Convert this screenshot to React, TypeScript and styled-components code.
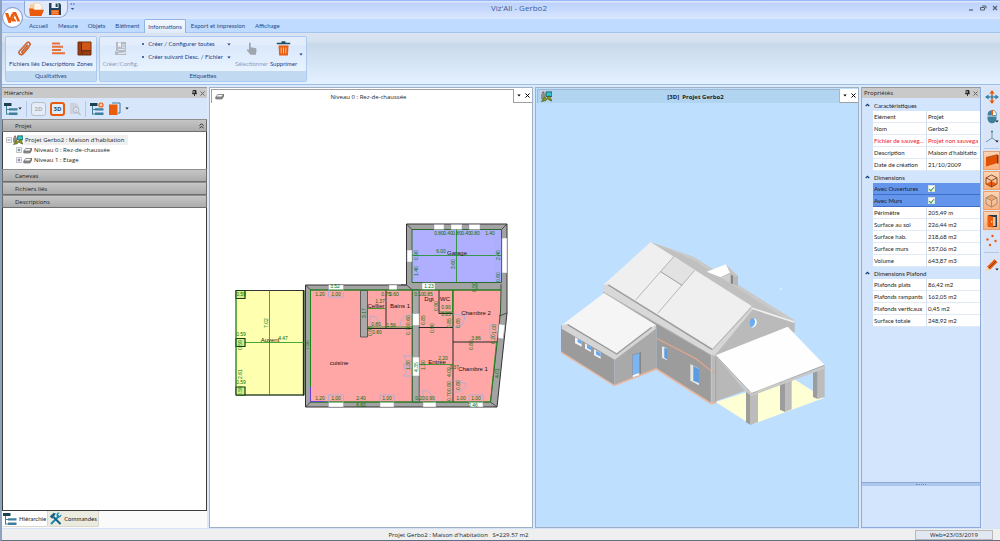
import React from "react";
import styled, { createGlobalStyle, css } from "styled-components";

const GlobalStyle = createGlobalStyle`
  * { box-sizing: border-box; }
  html, body { margin: 0; }
  body {
    font-family: "Open Sans", "Noto Sans", sans-serif;
    font-size: 6px;
    line-height: 10px;
    color: #1c1c1c;
    background: #cfe1f9;
  }
  button, input { font: inherit; color: inherit; margin: 0; }
  svg { display: block; flex: none; }
`;

const ORANGE = "#ea5b0c";
const STEEL = "#3f7f9b";
const NAVY = "#1f4e68";
const NARROW = `Lato, "Open Sans", sans-serif`;

/* ---------- Window frame ---------- */

const Window = styled.div`
  min-height: 100vh;
  display: flex;
  flex-direction: column;
  border-left: 2px solid #8ea3c0;
  border-bottom: 1px solid #5f6f86;
`;

const TitleBar = styled.header`
  position: relative;
  height: 19px;
  display: flex;
  align-items: flex-start;
  border-top: 1px solid #98b7f3;
  background: linear-gradient(#dbe7ff 0 1px, #bdd2fd 2px, #c8dafd 9px, #dae7fe 18px);
`;

const QuickAccess = styled.div`
  display: flex;
  align-items: center;
  gap: 4px;
  height: 17px;
  margin-left: 22px;
  padding: 0 5px 0 4px;
  border: 1px solid #8fa9d4;
  border-top: 0;
  border-radius: 0 0 9px 6px;
  background: #e0eafc;
`;

const PlainButton = styled.button`
  display: flex;
  align-items: center;
  justify-content: center;
  padding: 0;
  border: 0;
  background: none;
`;

const MoreButton = styled(PlainButton)`
  margin: 2px 0 0 2px;
`;

const WindowTitle = styled.h1`
  position: absolute;
  inset: 0 0 auto 36px;
  margin: 0;
  text-align: center;
  font-size: 8px;
  line-height: 14px;
  font-weight: 400;
  color: #3c5f9c;
  pointer-events: none;
`;

const WindowControls = styled.div`
  display: flex;
  gap: 4px;
  margin: 3px 1px 0 auto;
`;

const AppButton = styled(PlainButton)`
  position: absolute;
  left: 0;
  top: 6px;
  z-index: 2;
  width: 21px;
  height: 21px;
  border-radius: 50%;
  border: 1px solid #8298bd;
  background: radial-gradient(#ffffff 55%, #c9d5ea);
`;

const MenuTabs = styled.nav`
  display: flex;
  align-items: flex-end;
  height: 14px;
  padding-left: 22px;
  border-bottom: 1px solid #a3c4ee;
  background: #bfdbff;
  font-family: ${NARROW};
`;

const MenuTab = styled.button<{ $active?: boolean }>`
  height: 13px;
  padding: 0 4px;
  border: 1px solid transparent;
  border-bottom: 0;
  background: none;
  color: #2b4a86;
  line-height: 12px;
  ${(p) =>
    p.$active &&
    css`
      height: 14px;
      margin-bottom: -1px;
      padding: 0 3px;
      border-color: #8db2e3;
      border-radius: 2px 2px 0 0;
      background: linear-gradient(#f4f9ff, #e0ebfa);
    `}
`;

/* ---------- Ribbon ---------- */

const Ribbon = styled.section`
  display: flex;
  gap: 2px;
  height: 51px;
  padding: 3px 3px 2px;
  background: linear-gradient(#dae4f2 0, #d6e1f0 8px, #c8d9ea 11px, #e3f0ff 50px);
  font-family: ${NARROW};
`;

const Group = styled.div`
  display: flex;
  flex-direction: column;
  border: 1px solid #abcaf3;
  border-radius: 2px;
  background: linear-gradient(#e3edfb 0 8px, #d9e8fc 9px, #e9f3ff 34px);
`;

const GroupBody = styled.div`
  display: flex;
  flex: 1;
  padding: 0 3px;
  gap: 2px;
`;

const GroupCaption = styled.div`
  height: 10px;
  text-align: center;
  color: #24508f;
  background: #c2d9f2;
`;

const RibbonButton = styled.button`
  display: flex;
  flex-direction: column;
  align-items: center;
  gap: 3px;
  padding: 4px 0 0;
  border: 0;
  background: none;
  color: #1b3f86;
  white-space: nowrap;
  &:disabled { color: #8f9fb5; }
`;

const CommandList = styled.div`
  display: flex;
  flex-direction: column;
  gap: 3px;
  padding: 2px 2px 0;
`;

const Command = styled.button`
  display: flex;
  align-items: center;
  gap: 4px;
  padding: 0;
  border: 0;
  background: none;
  color: #1b3f86;
  white-space: nowrap;
  &::before {
    content: "";
    width: 2px;
    height: 2px;
    border-radius: 50%;
    background: #1b3f86;
  }
  & > svg { margin-left: auto; }
`;

/* ---------- Work area ---------- */

const Workspace = styled.main`
  flex: 1;
  display: grid;
  grid-template-columns: 205px minmax(0, 1fr) minmax(0, 1fr) 120px 17px;
  gap: 0 2px;
  padding-top: 2px;
  border-top: 1px solid #9dbfe8;
  background: #dce9fb;
`;

const Panel = styled.section`
  display: flex;
  flex-direction: column;
  min-width: 0;
`;

const PanelHeader = styled.header`
  display: flex;
  align-items: center;
  gap: 3px;
  height: 11px;
  padding: 0 2px;
  border-top: 1px solid #9a9a9a;
  background: #c9c9c9;
`;

const PanelTitle = styled.h2`
  flex: 1;
  margin: 0;
  font-size: 6px;
  line-height: 10px;
  font-weight: 400;
`;

const HierarchyTools = styled.div`
  display: flex;
  align-items: center;
  gap: 4px;
  height: 21px;
  padding: 0 2px;
  background: #d8e6fb;
`;

const Separator = styled.span`
  width: 1px;
  height: 16px;
  background: #b3c8e6;
`;

const ModeButton = styled.button<{ $on?: boolean }>`
  width: 15px;
  height: 14px;
  padding: 0;
  border: ${(p) => (p.$on ? `2px solid ${ORANGE}` : "1px solid #b9bec6")};
  border-radius: 3px;
  background: #e4ecf9;
  color: ${(p) => (p.$on ? NAVY : "#a9b0ba")};
  font-weight: 700;
`;

const SectionBar = styled.button`
  display: flex;
  align-items: center;
  justify-content: space-between;
  flex: none;
  height: 13px;
  padding: 0 2px 0 12px;
  border: 1px solid #6d6d6d;
  border-top-color: #8f8f8f;
  background: linear-gradient(#c6c6c6, #acacac);
`;

const TreeBox = styled.div`
  padding: 3px 0 4px 3px;
  border: 1px solid #3c3c3c;
  border-width: 0 1px;
  background: #ffffff;
`;

const TreeList = styled.ul`
  margin: 0;
  padding: 0;
  list-style: none;
  & & { padding-left: 10px; }
`;

const TreeRow = styled.div`
  display: flex;
  align-items: center;
  gap: 1px;
  height: 10px;
`;

const TreeLabel = styled.span<{ $selected?: boolean }>`
  padding: 0 4px 0 1px;
  background: ${(p) => (p.$selected ? "#f0f0f0" : "none")};
`;

const BlankArea = styled.div`
  flex: 1;
  border: 1px solid #3c3c3c;
  border-top: 0;
  background: #ffffff;
`;

const BottomTabs = styled.div`
  display: flex;
  align-items: flex-start;
  height: 17px;
  background: #fafafa;
  font-family: ${NARROW};
`;

const BottomTab = styled.button<{ $raised?: boolean }>`
  display: flex;
  align-items: center;
  gap: 2px;
  height: 16px;
  padding: 0 1px 0 1px;
  border: 1px solid #d8d8cc;
  border-top: 0;
  border-left: 0;
  border-radius: 0 0 2px 2px;
  background: ${(p) => (p.$raised ? "#ecebdf" : "#ffffff")};
`;

const DocPanel = styled(Panel)<{ $blue?: boolean }>`
  border: 1px solid #9fb0c6;
  background: ${(p) => (p.$blue ? "#bfdfff" : "#ffffff")};
`;

const DocHeader = styled.header`
  display: flex;
  height: 15px;
  padding-top: 1px;
`;

const DocTab = styled.h2<{ $blue?: boolean }>`
  flex: 1;
  display: flex;
  align-items: center;
  margin: 0 0 0 1px;
  padding-left: 3px;
  border: 1px solid ${(p) => (p.$blue ? "#a3b8cc" : "#a0a0a0")};
  border-bottom: 0;
  background: ${(p) => (p.$blue ? "#b1d4f1" : "#ffffff")};
  font-size: 6px;
  line-height: 12px;
  font-weight: ${(p) => (p.$blue ? 700 : 400)};
  & > span { flex: 1; text-align: center; }
`;

const DocButtons = styled.div`
  display: flex;
  align-items: center;
  justify-content: flex-end;
  gap: 4px;
  width: 18px;
  padding-right: 2px;
  border-bottom: 1px solid #a0a0a0;
  background: #ffffff;
`;

const Canvas = styled.div`
  flex: 1;
  min-height: 0;
  display: flex;
  & > svg { width: 100%; height: auto; }
`;

/* ---------- Properties ---------- */

const PropsPanel = styled(Panel)`
  border: 1px solid #8eaada;
  border-width: 0 1px 1px;
  background: #d3e5fc;
`;

const PropTable = styled.table`
  width: 100%;
  margin-top: 1px;
  border-spacing: 0;
  table-layout: fixed;
  font-family: ${NARROW};
`;

const GutterCol = styled.col`
  width: 11px;
`;

const NameCol = styled.col`
  width: 53px;
`;

const PropGroup = styled.th`
  height: 12px;
  padding: 0 0 0 1px;
  text-align: left;
  font-weight: 400;
  line-height: 11px;
  & > button { width: 100%; gap: 4px; justify-content: flex-start; padding-left: 2px; }
`;

const PropRow = styled.tr<{ $tone?: "alert" | "selected" }>`
  color: ${(p) => (p.$tone === "alert" ? "#f01828" : "#1c1c1c")};
  & > th, & > td {
    height: 12px;
    overflow: hidden;
    padding: 0 0 0 1px;
    border-bottom: 1px solid ${(p) => (p.$tone === "selected" ? "#3f6fcb" : "#e1e9f5")};
    background: ${(p) => (p.$tone === "selected" ? "#6495ed" : "#ffffff")};
    text-align: left;
    font-weight: 400;
    line-height: 11px;
    white-space: nowrap;
  }
  & > td:last-child { border-left: 1px solid ${(p) => (p.$tone === "selected" ? "#6495ed" : "#d5dfee")}; }
  & > td:first-child { background: #d3e5fc; border-bottom-color: #d3e5fc; }
`;

const Check = styled.input`
  appearance: none;
  display: block;
  width: 7px;
  height: 7px;
  border: 1px solid #d9e2da;
  background: #ffffff;
  &:checked::after {
    content: "";
    display: block;
    width: 2px;
    height: 4px;
    margin-left: 1px;
    border: solid #2f9e44;
    border-width: 0 1px 1px 0;
    transform: rotate(40deg);
  }
`;

const Splitter = styled.div`
  display: flex;
  align-items: center;
  justify-content: center;
  height: 4px;
  margin-top: auto;
  border-top: 1px solid #8eaada;
  background: #abc7ee;
  &::after {
    content: "";
    width: 10px;
    border-top: 1px dotted #6f8fc4;
  }
`;

const HelpArea = styled.div`
  height: 41px;
`;

const ViewTools = styled.aside`
  display: flex;
  flex-direction: column;
  gap: 1px;
  background: #d8e4f8;
`;

const ViewTool = styled.button<{ $active?: boolean }>`
  display: flex;
  align-items: center;
  justify-content: center;
  position: relative;
  height: 19px;
  padding: 0;
  border: 1px solid ${(p) => (p.$active ? "#e8a070" : "transparent")};
  background: ${(p) => (p.$active ? "linear-gradient(#fcd3b4, #fbb07c)" : "none")};
`;

const CornerMark = styled.span`
  position: absolute;
  right: 0;
  bottom: 2px;
`;

const Rule = styled.span`
  height: 1px;
  margin: 1px 1px;
  background: #b3c8e6;
`;

const StatusBar = styled.footer`
  display: flex;
  align-items: center;
  height: 12px;
  padding-right: 7px;
  border-top: 1px solid #d4e3f8;
  background: #efefef;
`;

const StatusText = styled.span`
  flex: 1;
  text-align: center;
  white-space: pre;
`;

const StatusBox = styled.span`
  width: 78px;
  border: 1px solid #b8b8b8;
  background: #e2e8f2;
  text-align: center;
  line-height: 8px;
`;

/* ---------- Icons ---------- */

const Caret = ({ color = "#1b3f86" }: { color?: string }) => (
  <svg width="4" height="3" viewBox="0 0 4 3"><path d="M0.3 .5h3.4L2 2.5z" fill={color} /></svg>
);
const Cross = ({ color = "#333" }: { color?: string }) => (
  <svg width="5" height="5" viewBox="0 0 5 5"><path d="M.5.5l4 4M4.5.5l-4 4" stroke={color} strokeWidth="1" /></svg>
);
const Pin = () => (
  <svg width="5" height="6" viewBox="0 0 5 6"><path d="M1 .5h3v3H1zM0 3.7h5M2.5 4v2" fill="none" stroke="#222" strokeWidth=".9" /><path d="M2.6.5h1.4v3H2.6z" fill="#222" /></svg>
);
const LogoIcon = () => (
  <svg width="17" height="17" viewBox="0 0 17 17">
    <path d="M1 4h3.200l1.700 5 1.600-4.600h2.300L6.800 14H4.600z" fill={ORANGE} />
    <path d="M8.400 3H12l4.200 9.600h-2.700l-2.700-6.300-1 2.500 2.700 3.800H8.200l-.6-1.600 1.700-4.600z" fill={ORANGE} />
  </svg>
);
const FolderIcon = () => (
  <svg width="15" height="15" viewBox="0 0 15 15">
    <path d="M1 2h5l1.500 1.500H13v7H1z" fill="#f6cfa2" />
    <path d="M5 1h5l3 3v5H5z" fill="#fff7ea" stroke="#e2c39c" strokeWidth=".6" />
    <path d="M0 6.500h4l1.200 1.200H15L12.500 14H1z" fill={ORANGE} />
  </svg>
);
const SaveIcon = () => (
  <svg width="14" height="14" viewBox="0 0 14 14">
    <path d="M1 1h10.5L13 2.5V13H1z" fill="#21455c" />
    <path d="M3.5 1h7v5h-7z" fill="#eef2f8" /><path d="M7.6 1.5h2V5h-2z" fill="#21455c" />
    <path d="M3 8h8v5H3z" fill={ORANGE} /><path d="M4 9.3h6M4 11.2h6" stroke="#ffc9a2" strokeWidth=".6" />
  </svg>
);
const ClipIcon = () => (
  <svg width="15" height="15" viewBox="0 0 15 15" fill="none" strokeLinecap="round" strokeLinejoin="round">
    <path d="M10.300 4.200L5.200 10.300c-.8 1.100.7 2.200 1.500 1.200l6-7.200c1.500-2-1.200-4.200-2.900-2.300L2.600 9.900c-1.900 2.500 1.500 5.200 3.600 2.900l5.500-6.500" stroke="#b8440c" strokeWidth="1.400" />
    <path d="M10.300 4.200L5.200 10.300c-.8 1.100.7 2.200 1.500 1.200l6-7.200c1.500-2-1.200-4.200-2.900-2.300L2.600 9.900c-1.900 2.500 1.500 5.200 3.600 2.900l5.500-6.500" stroke="#f28a52" strokeWidth=".6" />
  </svg>
);
const LinesIcon = () => (
  <svg width="15" height="15" viewBox="0 0 15 15"><path d="M1 2.5h8M1 5.8h11M1 9h9M1 12.2h13" stroke="#e8703a" strokeWidth="2.1" /></svg>
);
const ZonesIcon = () => (
  <svg width="15" height="15" viewBox="0 0 15 15">
    <path d="M1 1h13v13H1z" fill="#9c3c10" stroke="#6f3213" /><path d="M5 1.5h8.5v8H5z" fill="#cf5717" />
    <path d="M4.5 1v8.7H14M5 13.5V10" stroke="#5e2d14" fill="none" />
  </svg>
);
const FormIcon = () => (
  <svg width="15" height="15" viewBox="0 0 15 15">
    <path d="M3 1h10v10H3zM2 10v4h11v-2" fill="#b3bac4" /><path d="M5 3v3.5L6.5 5.3 8 6.5V1.5H5z" fill="#edf2f8" />
    <path d="M9 4h3M9 6.2h3M5 8.4h7M5 12.4h7" stroke="#edf2f8" strokeWidth=".9" />
  </svg>
);
const HandIcon = () => (
  <svg width="15" height="15" viewBox="0 0 15 15">
    <path d="M5 2.2c0-1 1.7-1 1.7 0v4l4.3.8c1.2.3 1.6 1 1.5 2l-.5 4.8H6.5L3 9.4c-.5-1 .6-1.6 1.3-1L5 9z" fill="#a0a6ae" />
  </svg>
);
const TrashIcon = () => (
  <svg width="15" height="15" viewBox="0 0 15 15">
    <path d="M2.5 4.6h10l-.6 9.9H3.2z" fill={ORANGE} /><path d="M0.800 2.6h13.400M5.5 1h4" stroke={NAVY} strokeWidth="1.5" />
    <path d="M5.2 6.500v6M7.5 6.500v6M9.8 6.500v6" stroke="#ffe3d0" strokeWidth=".8" />
  </svg>
);
const TreeIcon = ({ plus }: { plus?: boolean }) => (
  <svg width="14" height="14" viewBox="0 0 14 14">
    <path d="M0 1h7.5v3H0z" fill="#1c4150" /><path d="M2.5 4v8.5M2.5 7.5h3M2.5 12h3" stroke={STEEL} fill="none" />
    <path d="M5 6.2h8.5v2.4H5zM5 10.6h8.5V13H5z" fill={STEEL} />
    {plus && <g><circle cx="11" cy="3" r="2.6" fill={ORANGE} /><path d="M9.4 3h3.2M11 1.4v3.2" stroke="#fff" strokeWidth=".9" /></g>}
  </svg>
);
const PageSearchIcon = () => (
  <svg width="12" height="14" viewBox="0 0 12 14">
    <path d="M1 1h6l2.5 2.5V12H1z" fill="#cdd2da" /><circle cx="7.2" cy="8" r="2.8" fill="#e3e9f2" stroke="#b4bac4" />
    <path d="M9.2 10.2L11.5 13M7.2 7.4v2.2" stroke="#b4bac4" strokeWidth="1.2" />
  </svg>
);
const PagesIcon = () => (
  <svg width="13" height="14" viewBox="0 0 13 14"><path d="M4 1h8v10h-2" fill="none" stroke={STEEL} /><path d="M1 2.5h8.5V13H1z" fill={ORANGE} /></svg>
);
const ProjectIcon = ({ size = 10 }: { size?: number }) => (
  <svg width={size} height={size} viewBox="0 0 12 12">
    <path d="M0 4l2.500-3.500L5 4v5H0z" fill="#8b8f88" /><path d="M5.500 1H12v5H5.500z" fill="#2fc3cb" stroke="#1d3d3d" strokeWidth=".8" />
    <path d="M.5 11.500l3.500-5 2 2 3-3.500 1 2 2 4-3-1.200-2-1.300-2 2z" fill="#8f9a1c" stroke="#394310" strokeWidth=".6" /><path d="M1 2.200L2.500.3 4 2.200z" fill="#d33" />
  </svg>
);
const LevelIcon = () => (
  <svg width="9" height="7" viewBox="0 0 9 7"><path d="M2.700 1.500h6L7 4.200H.8z" fill="#fafafa" stroke="#666" strokeWidth=".7" /><path d="M.8 4.200V6H7l1.700-2.700V1.500L7 4.200z" fill="#999" stroke="#555" strokeWidth=".6" /></svg>
);
const Expander = ({ open }: { open?: boolean }) => (
  <svg width="6" height="6" viewBox="0 0 6 6"><path d="M.5.5h5v5h-5z" fill="#fff" stroke="#a8a8a8" strokeWidth=".7" /><path d={open ? "M1.5 3h3" : "M1.5 3h3M3 1.5v3"} stroke="#2b4a86" strokeWidth=".7" /></svg>
);
const ToolsIcon = () => (
  <svg width="13" height="13" viewBox="0 0 13 13" fill="none">
    <path d="M2 12L10 4" stroke="#1a8ab8" strokeWidth="2" /><path d="M12.3 2.2L10.6 4 9 2.4 10.5.7C8 .2 6.8 2.2 7.8 4.4l1 .8c2 .7 4.2-.7 3.5-3z" fill="#1a8ab8" />
    <path d="M4.5 5l7 7" stroke="#14607f" strokeWidth="2" /><path d="M.8 4.4L4.8.8l2 1-3.6 5z" fill="#14607f" />
  </svg>
);
const DoubleUp = () => (
  <svg width="5" height="6" viewBox="0 0 5 6"><path d="M.5 2.7l2-2 2 2M.5 5.3l2-2 2 2" stroke="#222" strokeWidth=".9" fill="none" /></svg>
);
const MoveIcon = () => (
  <svg width="14" height="14" viewBox="0 0 14 14">
    <path d="M7 0l2.6 3.6H4.4zM7 14l2.6-3.6H4.4z" fill={ORANGE} /><path d="M0 7l3.6-2.6v5.2zM14 7l-3.6-2.6v5.2z" fill={STEEL} />
    <path d="M7 3v2.5M7 8.5V11" stroke={ORANGE} strokeWidth="1.6" /><path d="M3 7h2M9 7h2" stroke={STEEL} strokeWidth="1.6" /><path d="M5.5 5.5h3v3h-3z" fill={STEEL} />
  </svg>
);
const MouseIcon = () => (
  <svg width="12" height="15" viewBox="0 0 12 15">
    <path d="M1.5 7.5h9V9c0 7-9 7-9 0z" fill={STEEL} /><path d="M1.5 6.5C1.5 3 3 1.5 5.5 1.2v5.3z" fill={STEEL} />
    <path d="M6.5 1.2c2.5.3 4 1.8 4 5.3h-4z" fill="#fff" stroke={STEEL} strokeWidth=".8" /><path d="M5 1.200h2v5H5z" fill={ORANGE} />
  </svg>
);
const AxisIcon = () => (
  <svg width="14" height="14" viewBox="0 0 14 14"><path d="M7 1v7l-6 4M7 8l6 4" stroke="#6f97ac" fill="none" /><circle cx="7" cy="1.4" r="1" fill={STEEL} /></svg>
);
const WallIcon = () => (
  <svg width="14" height="13" viewBox="0 0 14 13"><path d="M1 3.5L12 .7v8.6L1 12.5z" fill="#e25206" /><path d="M12 .7l1.5.8v8.2L12 9.3z" fill="#7d3208" /><path d="M1 3.5L12 .7l1.5.8" stroke="#a34413" strokeWidth=".7" fill="none" /></svg>
);
const CubeIcon = ({ top }: { top?: boolean }) => (
  <svg width="13" height="14" viewBox="0 0 13 14" fill="none">
    <path d={top ? "M6.5 1l5.5 2.8-5.5 2.8L1 3.8z" : "M6.5 7l5.5 3-5.5 3L1 10z"} fill={top ? "#f8a060" : ORANGE} />
    <path d="M6.5 1L12 3.8V10l-5.5 3L1 10V3.8zM1 3.8l5.5 2.8L12 3.8M6.5 6.6V13" stroke={top ? "#8f8a84" : "#7d4526"} strokeWidth=".9" />
  </svg>
);
const DoorIcon = () => (
  <svg width="12" height="14" viewBox="0 0 12 14"><path d="M2.5 1H11v12H2.5z" fill="#203c4c" /><path d="M6.800 3H9.500v9H6.800z" fill="#fac096" /><path d="M1.500 1.2l5.500 1.5v10.800l-5.500-1z" fill={ORANGE} /><circle cx="5.7" cy="7.7" r=".7" fill="#fff" /></svg>
);
const DotsIcon = () => (
  <svg width="13" height="13" viewBox="0 0 13 13" fill={ORANGE}><circle cx="7.5" cy="2" r="1.200" /><circle cx="2.5" cy="5.5" r="1.200" /><circle cx="10.5" cy="7" r="1.200" /><circle cx="5" cy="11" r="1.200" /></svg>
);
const PencilIcon = () => (
  <svg width="14" height="14" viewBox="0 0 14 14"><path d="M2 8.7L9.5 1.2l3 3L5 11.7z" fill={ORANGE} /><path d="M3.7 10.3L11 3" stroke="#8f3605" strokeWidth="1" /><path d="M2 8.7l3 3L.8 13z" fill="#f6d0a6" /></svg>
);

/* ---------- Floor plan ---------- */

type Label = [number, number, string, boolean?];

const measures: Label[] = [
  [320, 296, "1.20"], [336, 296, "1.00"], [335, 288, "3.52"], [364, 313, "3.17", true],
  [320, 400, "1.20"], [336, 400, "1.00"], [361, 400, "2.40"], [387, 400, "1.00"], [361, 407, "6.60"],
  [307, 345, "7.50", true], [266, 323, "7.02", true], [283, 340, "4.47"], [240, 374, "2.61", true],
  [241, 336, "0.59"], [241, 384, "0.59"], [241, 296, "0.59"],
  [240, 345, "0.59", true], [240, 391, "0.59", true],
  [439, 235, "0.80"], [448, 235, "0.40"], [457, 235, "0.80"], [466, 235, "0.40"], [475, 235, "0.80"], [490, 235, "1.40"],
  [441, 253, "6.00"], [453, 264, "3.60", true], [416, 255, "0.90", true], [416, 271, "1.40", true],
  [498, 255, "2.40", true], [498, 277, "0.60", true], [429, 288, "1.23"], [474, 287, "0.50", true],
  [386, 296, "0.75"], [394, 296, "0.60"], [419, 296, "0.10"], [428, 296, "0.85"], [436, 306, "0.90", true],
  [376, 326, "0.80"], [391, 327, "1.56"], [377, 334, "0.80"], [370, 331, "0.98", true], [380, 303, "1.37"],
  [408, 320, "0.60", true], [408, 330, "0.70", true], [423, 320, "0.85", true], [432, 328, "0.90", true],
  [446, 309, "0.90"], [446, 316, "0.85"], [449, 323, "0.85", true], [458, 323, "0.85", true],
  [476, 340, "3.86"], [471, 345, "0.80", true], [493, 339, "0.20", true], [494, 329, "1.00", true],
  [408, 365, "1.30", true], [416, 367, "4.35", true], [423, 365, "1.30", true],
  [443, 360, "2.20"], [449, 372, "4.00", true], [454, 369, "3.37"], [449, 386, "0.80", true], [449, 396, "0.70", true],
  [458, 385, "0.80", true], [420, 400, "0.20"], [430, 400, "0.90"], [461, 400, "1.00"], [476, 400, "1.00"],
  [473, 407, "2.46"], [497, 373, "4.01", true],
];

const rooms: Label[] = [
  [270, 342, "Auvent"], [339, 365, "cuisine"], [457, 255, "Garage"], [376, 308, "Cellier"], [400, 308, "Bains 1"],
  [429, 301, "Dgt"], [445, 301, "WC"], [437, 364, "Entrée"], [476, 315, "Chambre 2"], [473, 371, "Chambre 1"],
];

const MeasureText = styled.text`
  font: 5px "Liberation Sans", sans-serif;
  fill: #067006;
  text-anchor: middle;
`;

const RoomText = styled.text`
  font: 6px "Liberation Sans", sans-serif;
  fill: #1a1010;
  text-anchor: middle;
`;

const FloorPlan = () => (
  <svg viewBox="210 104 322 422" role="img" aria-label="Plan du rez-de-chaussée">
    <path d="M236 290.5h68V395h-68z" fill="#ffffb0" stroke="#3d7a2e" />
    <path d="M236 290.5h68M236 395h68" stroke="#333" />
    <path d="M303.6 290v105.500" stroke="#222" strokeWidth="1.5" />
    <path d="M305.500 285H406.500V224h100.500v89l-10 94H305.500z" fill="#a3a3a3" stroke="#333" />
    <path d="M412 229.500h89.500v53H412z" fill="#b0aeff" stroke="#2a6a2a" />
    <path d="M310.500 290H501l-.5 22-10 90H310.500z" fill="#ffa6a6" stroke="#2b5a2b" />
    <path d="M305.500 285l5 5M305.500 407l5-5M406.500 224l5.500 5.500M507 224l-5.500 5.500M497 407l-6.500-5M406.500 285l-5.500-.2M406.500 285l6 5M507 313l-8 3M501 284v6" stroke="#333" strokeWidth=".8" />
    <path d="M412.500 290h6.700v112h-6.700zM360.500 290.500h7v46.500h-7z" fill="#a9a9a9" stroke="#444" strokeWidth=".8" />
    <path d="M328.500 285h15v5h-15zM389 285h8v5h-8zM328.500 402h15v5h-15zM380 402h14v5h-14zM423 402h13v5h-13zM469 402h14v5h-14zM422 283h13v6.500h-13zM434 224.500h10v5h-10zM451 224.500h11v5h-11zM469 224.500h11v5h-11zM407 250h5v12h-5zM502 238h5v35h-5zM412.500 313.500h6.700v12h-6.700zM412.500 357h6.700v19h-6.700zM499 324l6 1-2 14-5-1z" fill="#fff" stroke="#99a" strokeWidth=".5" />
    <path d="M386 290v38.500M367.500 328.500h45M439 290v23.500h14M453 290v112M419 327.500h34M453 342h44" stroke="#2a2a2a" fill="none" />
    <path d="M269.500 290v105M236 342.500h68M412 255.500h89.500M456.500 229.500v53M367.500 308.500h18M367.500 327h45M419 364.500h34M310.500 402V290H501M310.500 402h180M496.500 342l-6 60M412 290v112M439.500 312h13v-22M453 313v14M477 283v7" stroke="#189018" fill="none" strokeWidth=".8" />
    <path d="M236 290.500h9v8h-9zM236 338.500h9v8h-9zM236 387h9v8h-9z" fill="#d8f08c" stroke="#143c14" strokeWidth="1.2" />
    <path d="M236 298v89" stroke="#189018" strokeWidth=".8" />
    <path d="M328.500 290v7h15v-7M328.500 402v-7h15v7M380 402v-7h14v7M469 402v-7h14v7M370 327v-11c7 0 10 5 10 11M412 315c-8-1-12 5-12 12M412 356h-9l4 5-4 4h9M412 367h-9l4 5-4 4h9M423 402v-12c7 1 11 6 12 12M453 327c8 1 11-3 12-11l-12-2M453 392c8 1 12-3 13-8l-13-4M496 325h-6v12h6M500 236l-5 6 5 6-5 6 5 6-5 6 5 6" fill="none" stroke="#8cb4ea" strokeWidth=".7" />
    <path d="M310.500 387v14.500h14" fill="none" stroke="#6a3fd8" />
    {rooms.map(([x, y, text]) => <RoomText key={text} x={x} y={y}>{text}</RoomText>)}
    {measures.map(([x, y, text, upright], i) => (
      <MeasureText key={i} x={x} y={y} transform={upright ? `rotate(-90 ${x} ${y}) translate(0 2)` : undefined}>{text}</MeasureText>
    ))}
  </svg>
);

/* ---------- 3D model ---------- */

const HouseModel = () => (
  <svg viewBox="-39 -378 966 1266" role="img" aria-label="Vue 3D de la maison">
    <path d="M500 516l230-72 95 60-218 80z" fill="#ffffd6" />
    <path d="M305 36l130 46 300 192v30l-230 80z" fill="#c0c0c0" />
    <path d="M312 38l123 43 302 190-14 4-290-185z" fill="#c9c9c9" />
    <path d="M515 141l32-16 20 14v30l-10-4z" fill="#b8b8b8" /><path d="M515 143l28-12v26z" fill="#d0d0d0" />
    <path d="M473 125l58-22 14 24-30 15z" fill="#fff" /><path d="M531 103l16 16 20 18-10 4-14-12z" fill="#c4c4c4" /><path d="M549 136v25" stroke="#858585" strokeWidth="6" />
    <path d="M162 166L490 360v162L322 416V290L162 190z" fill="#9c9c9c" />
    <path d="M487 362L607 232l130 45v30L500 380v138l-13 4z" fill="#bababa" />
    <path d="M500 378L600 490v-10L595 480 500 514z" fill="#b8b8b8" />
    <path d="M305 36l303 192-118 132-328-194z" fill="#efefef" />
    <path d="M375 79l62 42-38 45-64-41z" fill="#e2e2e2" />
    <path d="M375 79L260 210M437 121L326 250" stroke="#999" strokeWidth="2" /><path d="M335 125l64 41" stroke="#777" strokeWidth="2" />
    <path d="M162 166l16-5 311 194v22L162 188z" fill="#d8d8d8" /><path d="M178 165l311 193" stroke="#999" strokeWidth="4" /><path d="M162 186l325 190" stroke="#b0b0b0" strokeWidth="3" />
    <path d="M489 358L604 232l8 6-115 139-10-2z" fill="#d6d6d6" /><path d="M489 360L606 234" stroke="#999" strokeWidth="2" /><path d="M607 234l128 42" stroke="#eee" strokeWidth="5" />
    <path d="M36 285L196 384v82L36 366z" fill="#9b9b9b" />
    <path d="M196 384L322 288v128L196 466z" fill="#a9a9a9" />
    <path d="M165 189L322 286l-124 92L38 286z" fill="#f5f5f5" />
    <path d="M38 286l16-5 149 90 117-87v13L197 389 38 296z" fill="#d5d5d5" /><path d="M56 284l147 88 105-80" stroke="#999" strokeWidth="4" fill="none" />
    <path d="M36 364l160 100 126-50v6L196 469 36 369z" fill="#e8b7a0" />
    <path d="M322 414l165 104 15-4v6l-15 4L322 420z" fill="#e8b7a0" />
    <path d="M324 326l40 20 76 40 46 36 10 4" stroke="#dba58e" strokeWidth="4" fill="none" />
    <path d="M78 322l20 10v18l-20-10zM108 340l18 10v16l-18-10zM135 358l20 10v18l-20-10z" fill="#f2f2f2" /><path d="M86 326l12 6v11l-12-6zM114 343l12 7v11l-12-7zM141 362l14 7v11l-14-7z" fill="#68a9ee" />
    <path d="M250 374l26-8v66l-26 8z" fill="#868686" /><path d="M251 376l20-7v60l-20 8z" fill="#7cb6f2" /><path d="M251 436l20-7v6l-20 7z" fill="#fff" />
    <path d="M339 349l15 6v36l-15-8z" fill="#eaeaea" /><path d="M346 353l8 3v32l-8-5z" fill="#5b9be0" />
    <path d="M424 402l26 14v50l-26-14z" fill="#e6e6e6" /><path d="M433 408l17 9v42l-17-7z" fill="#5b9be0" />
    <path d="M487 374v148" stroke="#c8c8c8" strokeWidth="3" /><path d="M500 382v134" stroke="#969696" strokeWidth="2" />
    <ellipse cx="612" cy="279" rx="10" ry="14" fill="#6cacf0" /><path d="M606 291c10 0 16-14 9-26 12 2 12 25-4 28z" fill="#fff" />
    <path d="M591 484l14 6v95l-14-8z" fill="#9c9c9c" /><path d="M605 490l22-6v92l-22 9z" fill="#bcbcbc" />
    <path d="M693 456l15 2v88l-15-7z" fill="#9c9c9c" /><path d="M708 458l20-8v88l-20 8z" fill="#bcbcbc" />
    <path d="M792 420l14-3v90l-14-6z" fill="#9c9c9c" /><path d="M806 417l21-8v92l-21 6z" fill="#bcbcbc" />
    <path d="M500 376l216-86 110 114-218 86z" fill="#fefefe" /><path d="M500 376l108 116 218-86v10L608 498l-20-14z" fill="#c9c9c9" /><path d="M500 376l108 114 218-84" stroke="#999" strokeWidth="2" fill="none" />
    <circle cx="696" cy="177" r="3" fill="#e8f4ff" />
  </svg>
);

/* ---------- Data ---------- */

type Prop = { name: string; value: string | boolean; tone?: "alert" | "selected" };

const propertyGroups: { title: string; rows: Prop[] }[] = [
  {
    title: "Caractéristiques",
    rows: [
      { name: "Elément", value: "Projet" },
      { name: "Nom", value: "Gerbo2" },
      { name: "Fichier de sauveg...", value: "Projet non sauvega", tone: "alert" },
      { name: "Description", value: "Maison d'habitatio" },
      { name: "Date de création", value: "21/10/2009" },
    ],
  },
  {
    title: "Dimensions",
    rows: [
      { name: "Avec Ouvertures", value: true, tone: "selected" },
      { name: "Avec Murs", value: true, tone: "selected" },
      { name: "Périmètre", value: "205,49 m" },
      { name: "Surface au sol", value: "226,44 m2" },
      { name: "Surface hab.", value: "218,68 m2" },
      { name: "Surface murs", value: "557,06 m2" },
      { name: "Volume", value: "643,87 m3" },
    ],
  },
  {
    title: "Dimensions Plafond",
    rows: [
      { name: "Plafonds plats", value: "86,42 m2" },
      { name: "Plafonds rampants", value: "162,05 m2" },
      { name: "Plafonds verticaux", value: "0,45 m2" },
      { name: "Surface totale", value: "248,92 m2" },
    ],
  },
];

const menu = ["Accueil", "Mesure", "Objets", "Bâtiment", "Informations", "Export et impression", "Affichage"];

export default function App() {
  return (
    <>
      <GlobalStyle />
      <Window>
        <TitleBar>
          <AppButton aria-label="Menu de l'application"><LogoIcon /></AppButton>
          <QuickAccess>
            <PlainButton aria-label="Ouvrir"><FolderIcon /></PlainButton>
            <PlainButton aria-label="Enregistrer"><SaveIcon /></PlainButton>
          </QuickAccess>
          <MoreButton aria-label="Personnaliser">
            <svg width="5" height="8" viewBox="0 0 5 8"><path d="M.5 1h1.500M3 1h1.500" stroke="#35568f" /><path d="M.8 5h3.400L2.500 7z" fill="#35568f" /></svg>
          </MoreButton>
          <WindowTitle>Viz'All - Gerbo2</WindowTitle>
          <WindowControls>
            <PlainButton aria-label="Réduire"><svg width="8" height="8" viewBox="0 0 8 8"><path d="M2 6h4" stroke="#555f70" strokeWidth="1.200" /></svg></PlainButton>
            <PlainButton aria-label="Restaurer"><svg width="8" height="8" viewBox="0 0 8 8"><path d="M3 2h4v2.500M1.500 3.500H5.500V6h-4z" stroke="#555f70" fill="none" /></svg></PlainButton>
            <PlainButton aria-label="Fermer"><svg width="8" height="8" viewBox="0 0 8 8"><path d="M2 2l4 4M6 2L2 6" stroke="#555f70" strokeWidth="1.200" /></svg></PlainButton>
          </WindowControls>
        </TitleBar>
        <MenuTabs>
          {menu.map((m) => <MenuTab key={m} $active={m === "Informations"}>{m}</MenuTab>)}
        </MenuTabs>
        <Ribbon>
          <Group>
            <GroupBody>
              <RibbonButton><ClipIcon />Fichiers liés</RibbonButton>
              <RibbonButton><LinesIcon />Descriptions</RibbonButton>
              <RibbonButton><ZonesIcon />Zones</RibbonButton>
            </GroupBody>
            <GroupCaption>Qualitatives</GroupCaption>
          </Group>
          <Group>
            <GroupBody>
              <RibbonButton disabled><FormIcon />Créer/Config.</RibbonButton>
              <CommandList>
                <Command>Créer / Configurer toutes <Caret /></Command>
                <Command>Créer suivant Desc. / Fichier <Caret /></Command>
              </CommandList>
              <RibbonButton disabled><HandIcon />Sélectionner</RibbonButton>
              <RibbonButton><TrashIcon />Supprimer</RibbonButton>
              <PlainButton aria-label="Options de suppression"><Caret /></PlainButton>
            </GroupBody>
            <GroupCaption>Etiquettes</GroupCaption>
          </Group>
        </Ribbon>

        <Workspace>
          <Panel>
            <PanelHeader>
              <PanelTitle>Hiérarchie</PanelTitle>
              <PlainButton aria-label="Épingler"><Pin /></PlainButton>
              <PlainButton aria-label="Fermer"><Cross color="#666" /></PlainButton>
            </PanelHeader>
            <HierarchyTools>
              <PlainButton aria-label="Arborescence"><TreeIcon /><Caret color="#222" /></PlainButton>
              <Separator />
              <ModeButton>2D</ModeButton>
              <ModeButton $on>3D</ModeButton>
              <PlainButton aria-label="Aperçu" disabled><PageSearchIcon /></PlainButton>
              <Separator />
              <PlainButton aria-label="Ajouter un niveau"><TreeIcon plus /></PlainButton>
              <PlainButton aria-label="Copier"><PagesIcon /></PlainButton>
              <PlainButton aria-label="Options"><Caret color="#222" /></PlainButton>
            </HierarchyTools>
            <SectionBar>Projet <DoubleUp /></SectionBar>
            <TreeBox>
              <TreeList>
                <li>
                  <TreeRow><Expander open /><ProjectIcon /><TreeLabel $selected>Projet Gerbo2 : Maison d'habitation</TreeLabel></TreeRow>
                  <TreeList>
                    <li><TreeRow><Expander /><LevelIcon /><TreeLabel>Niveau 0 : Rez-de-chaussée</TreeLabel></TreeRow></li>
                    <li><TreeRow><Expander /><LevelIcon /><TreeLabel>Niveau 1 : Etage</TreeLabel></TreeRow></li>
                  </TreeList>
                </li>
              </TreeList>
            </TreeBox>
            <SectionBar>Canevas</SectionBar>
            <SectionBar>Fichiers liés</SectionBar>
            <SectionBar>Descriptions</SectionBar>
            <BlankArea />
            <BottomTabs>
              <BottomTab><TreeIcon />Hiérarchie</BottomTab>
              <BottomTab $raised><ToolsIcon />Commandes</BottomTab>
            </BottomTabs>
          </Panel>

          <DocPanel>
            <DocHeader>
              <DocTab><LevelIcon /><span>Niveau 0 : Rez-de-chaussée</span></DocTab>
              <DocButtons>
                <PlainButton aria-label="Liste des vues"><Caret color="#000" /></PlainButton>
                <PlainButton aria-label="Fermer la vue"><Cross color="#000" /></PlainButton>
              </DocButtons>
            </DocHeader>
            <Canvas><FloorPlan /></Canvas>
          </DocPanel>

          <DocPanel $blue>
            <DocHeader>
              <DocTab $blue><ProjectIcon size={11} /><span>[3D]&nbsp; Projet Gerbo2</span></DocTab>
              <DocButtons>
                <PlainButton aria-label="Liste des vues"><Caret color="#000" /></PlainButton>
                <PlainButton aria-label="Fermer la vue"><Cross color="#000" /></PlainButton>
              </DocButtons>
            </DocHeader>
            <Canvas><HouseModel /></Canvas>
          </DocPanel>

          <PropsPanel>
            <PanelHeader>
              <PanelTitle>Propriétés</PanelTitle>
              <PlainButton aria-label="Épingler"><Pin /></PlainButton>
              <PlainButton aria-label="Fermer"><Cross color="#666" /></PlainButton>
            </PanelHeader>
            <PropTable>
              <colgroup><GutterCol /><NameCol /><col /></colgroup>
              {propertyGroups.map((g) => (
                <tbody key={g.title}>
                  <tr>
                    <PropGroup colSpan={3} scope="rowgroup">
                      <PlainButton>
                        <svg width="5" height="4" viewBox="0 0 5 4"><path d="M.7 3.200L2.500 1.300l1.800 1.900" stroke="#14306a" fill="none" strokeWidth="1.200" /></svg>
                        {g.title}
                      </PlainButton>
                    </PropGroup>
                  </tr>
                  {g.rows.map((r) => (
                    <PropRow key={r.name} $tone={r.tone}>
                      <td />
                      <th scope="row">{r.name}</th>
                      <td>{typeof r.value === "boolean" ? <Check type="checkbox" defaultChecked={r.value} aria-label={r.name} /> : r.value}</td>
                    </PropRow>
                  ))}
                </tbody>
              ))}
            </PropTable>
            <Splitter />
            <HelpArea />
          </PropsPanel>

          <ViewTools>
            <ViewTool aria-label="Déplacer"><MoveIcon /></ViewTool>
            <ViewTool aria-label="Souris"><MouseIcon /><CornerMark><Caret color="#222" /></CornerMark></ViewTool>
            <ViewTool aria-label="Axes"><AxisIcon /><CornerMark><Caret color="#222" /></CornerMark></ViewTool>
            <Rule />
            <ViewTool $active aria-label="Murs"><WallIcon /></ViewTool>
            <ViewTool $active aria-label="Sols"><CubeIcon /></ViewTool>
            <ViewTool $active aria-label="Plafonds"><CubeIcon top /></ViewTool>
            <ViewTool $active aria-label="Ouvertures"><DoorIcon /></ViewTool>
            <ViewTool aria-label="Points"><DotsIcon /></ViewTool>
            <Rule />
            <ViewTool aria-label="Dessiner"><PencilIcon /><CornerMark><Caret color="#222" /></CornerMark></ViewTool>
          </ViewTools>
        </Workspace>

        <StatusBar>
          <StatusText>{"Projet Gerbo2 : Maison d'habitation   S=229.57 m2"}</StatusText>
          <StatusBox>Web=23/03/2019</StatusBox>
        </StatusBar>
      </Window>
    </>
  );
}
